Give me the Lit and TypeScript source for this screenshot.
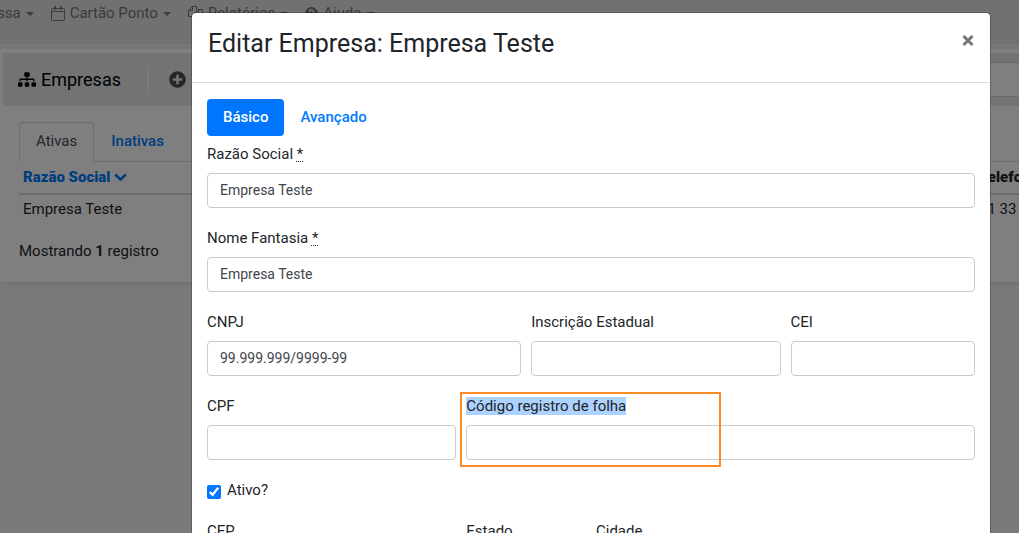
import { LitElement, html, css, svg } from "lit";
import { customElement, state } from "lit/decorators.js";

const sitemap = svg`<path fill="currentColor" d="M128 352H32c-17.67 0-32 14.33-32 32v96c0 17.67 14.33 32 32 32h96c17.67 0 32-14.33 32-32v-96c0-17.67-14.33-32-32-32zm-24-80h192v48h48v-48h192v48h48v-57.59c0-21.17-17.23-38.41-38.41-38.41H344v-64h40c17.67 0 32-14.33 32-32V32c0-17.67-14.33-32-32-32H256c-17.67 0-32 14.33-32 32v96c0 17.67 14.33 32 32 32h40v64H94.41C73.23 224 56 241.23 56 262.41V320h48v-48zm264 80h-96c-17.67 0-32 14.33-32 32v96c0 17.67 14.33 32 32 32h96c17.67 0 32-14.33 32-32v-96c0-17.67-14.33-32-32-32zm240 0h-96c-17.67 0-32 14.33-32 32v96c0 17.67 14.33 32 32 32h96c17.67 0 32-14.33 32-32v-96c0-17.67-14.33-32-32-32z"/>`;
const plusCircle = svg`<path fill="currentColor" d="M256 8C119 8 8 119 8 256s111 248 248 248 248-111 248-248S393 8 256 8zm144 276c0 6.6-5.4 12-12 12h-92v92c0 6.6-5.4 12-12 12h-56c-6.6 0-12-5.4-12-12v-92h-92c-6.6 0-12-5.4-12-12v-56c0-6.6 5.4-12 12-12h92v-92c0-6.6 5.4-12 12-12h56c6.6 0 12 5.4 12 12v92h92c6.6 0 12 5.4 12 12v56z"/>`;

@customElement("app-root")
export class AppRoot extends LitElement {
  static styles = css`
    :host {
      display: block;
      position: relative;
      height: 100vh;
      overflow: hidden;
      background: #f3f7f6;
      color: #212529;
      font: 15px/21px Roboto, "Liberation Sans", sans-serif;
    }
    * { box-sizing: border-box; }
    a { color: #007bff; text-decoration: none; }
    button, input { font: inherit; margin: 0; }
    svg { display: block; flex: none; }

    .navbar {
      display: flex;
      align-items: flex-start;
      height: 44px;
      margin-left: -3px;
      padding-top: 3px;
      background: #e2e2e2;
    }
    .navbar a {
      display: flex;
      align-items: center;
      gap: 5px;
      margin-right: 17px;
      color: #777;
      white-space: nowrap;
    }
    .navbar .caret {
      border: 4px solid transparent;
      border-top-color: currentColor;
      border-bottom: 0;
    }
    .strip { height: 5px; background: #efefef; }

    .card {
      padding: 4px 0 20px 3px;
      background: #fff;
      border-radius: 4px 0 0 4px;
      box-shadow: 0 2px 6px rgba(0, 0, 0, 0.1);
    }
    .card-head {
      display: flex;
      align-items: center;
      height: 53px;
      padding-left: 15px;
      background: #e2e6ea;
    }
    .card-head h1 {
      display: flex;
      align-items: center;
      gap: 5px;
      margin: 0;
      padding-right: 26px;
      font-size: 18px;
      font-weight: 400;
      line-height: 30px;
      color: #000;
      border-right: 2px solid #f4f5f6;
    }
    .add {
      margin-left: 20px;
      padding: 0;
      border: 0;
      background: none;
      color: #4c4c4c;
    }
    .search {
      width: 200px;
      height: 35px;
      margin-left: auto;
      border: 1px solid #ced4da;
      border-right: 0;
      background: #fff;
    }
    .card-body { padding: 16px 0 0 16px; }
    .tabs { display: flex; border-bottom: 1px solid #d5dde5; }
    .tabs a { padding: 8px 16px; border: 1px solid transparent; font-weight: 500; }
    .tabs .on {
      margin-bottom: -1px;
      border-color: #d5dde5 #d5dde5 #fff;
      border-radius: 4px 4px 0 0;
      background: #fff;
      color: #495057;
      font-weight: 400;
    }
    table { width: 100%; border-collapse: collapse; table-layout: fixed; }
    th, td {
      padding: 5px 4px;
      text-align: left;
      white-space: nowrap;
      overflow: hidden;
    }
    td { padding-top: 4px; }
    th { border-bottom: 2px solid #d5dde5; font-weight: 900; }
    th a { display: flex; align-items: center; gap: 4px; }
    .phone { width: 44px; padding-right: 0; }
    .count { margin: 16px 0 0; }

    .backdrop {
      position: absolute;
      inset: 0;
      padding: 12px 28px 0 191px;
      background: rgba(0, 0, 0, 0.5);
    }
    .modal {
      border: 1px solid rgba(0, 0, 0, 0.2);
      border-radius: 5px;
      background: #fff;
      background-clip: padding-box;
    }
    .modal-head {
      display: flex;
      align-items: flex-start;
      justify-content: space-between;
      height: 70px;
      padding: 16px;
      border-bottom: 1px solid #d5dde5;
    }
    .modal-head h2 { margin: 0; font-size: 25px; font-weight: 400; line-height: 30px; }
    .close { padding: 6px 0; border: 0; background: none; color: #777; }
    form { padding: 16px 15px; }
    .pills { display: flex; margin-bottom: 8px; }
    .pills a { padding: 8px 16px; border-radius: 4px; font-weight: 500; }
    .pills .on { background: #0075ff; color: #fff; }
    .grid {
      display: grid;
      grid-template-columns: repeat(12, minmax(0, 1fr));
      gap: 20px 10px;
    }
    .field { position: relative; }
    .w12 { grid-column: span 12; }
    .w8 { grid-column: span 8; }
    .w6 { grid-column: span 6; }
    .w5 { grid-column: span 5; }
    .w4 { grid-column: span 4; }
    .w3 { grid-column: span 3; }
    .w2 { grid-column: span 2; }
    .field label { display: block; margin-bottom: 8px; }
    .field mark { background: #acd2ff; color: inherit; }
    .field abbr { text-decoration: underline dotted 1px; text-underline-offset: 2px; }
    .field input {
      display: block;
      width: 100%;
      height: 35px;
      padding: 5px 12px 7px;
      border: 1px solid #c6ccd2;
      border-radius: 4px;
      background: #fff;
      color: #3f464d;
      font-size: 14px;
    }
    .frame {
      position: absolute;
      top: -4px;
      left: -6px;
      width: 261px;
      height: 75px;
      border: 2px solid #fd8b25;
      pointer-events: none;
    }
    .check { display: flex; align-items: center; gap: 6px; }
    .check input {
      width: 14px;
      height: 14px;
      margin-top: 3px;
      accent-color: #0075ff;
    }
  `;

  @state() private active = true;

  private field(id: string, label: string, span: string, value = "", required = false) {
    return html`<div class="field ${span}">
      <label for=${id}>${label}${required ? html` <abbr title="obrigatório">*</abbr>` : ""}</label>
      <input id=${id} type="text" .value=${value} />
    </div>`;
  }

  render() {
    return html`
      <nav class="navbar">
        <a href="#">ssa <i class="caret"></i></a>
        <a href="#">
          <svg width="14" height="15" viewBox="0 0 14 15" fill="none" stroke="currentColor">
            <path d="M1.5 2.5h11a1 1 0 0 1 1 1v10a1 1 0 0 1-1 1h-11a1 1 0 0 1-1-1v-10a1 1 0 0 1 1-1zM.5 5.5h13M3.5.5h1v3h-1zM9.5.5h1v3h-1z" />
          </svg>
          Cartão Ponto <i class="caret"></i>
        </a>
        <a href="#">
          <svg width="15" height="15" viewBox="0 0 15 15" fill="none" stroke="currentColor">
            <path d="M6 10.5H.5v-6l4-4h4v4M4.5.5v4h-4M14.5 3.500v11h-8v-7l4-4zM10.5 3.500v4h-4" />
          </svg>
          Relatórios <i class="caret"></i>
        </a>
        <a href="#">
          <svg width="13" height="13" viewBox="0 0 13 13">
            <circle cx="6.5" cy="6.5" r="6.5" fill="currentColor" />
            <path d="M4.5 5a2 2 0 1 1 3 1.500c-.8.4-1 .8-1 1.500M6.500 9v1.500" fill="none" stroke="#e2e2e2" stroke-width="1.6" />
          </svg>
          Ajuda <i class="caret"></i>
        </a>
      </nav>
      <div class="strip"></div>
      <main class="card">
        <div class="card-head">
          <h1><svg width="18" height="15" viewBox="0 0 640 512">${sitemap}</svg>Empresas</h1>
          <button class="add" type="button" aria-label="Adicionar">
            <svg width="17" height="17" viewBox="0 0 512 512">${plusCircle}</svg>
          </button>
          <input class="search" type="search" aria-label="Pesquisar" />
        </div>
        <div class="card-body">
          <nav class="tabs"><a class="on" href="#">Ativas</a><a href="#">Inativas</a></nav>
          <table>
            <thead>
              <tr>
                <th>
                  <a href="#">Razão Social
                    <svg width="13" height="9" viewBox="0 0 13 9" fill="none" stroke="currentColor" stroke-width="2.6"><path d="M1.2 1.500l5.3 5 5.3-5" /></svg>
                  </a>
                </th>
                <th class="phone">Telefone</th>
              </tr>
            </thead>
            <tbody>
              <tr><td>Empresa Teste</td><td class="phone">11 33</td></tr>
            </tbody>
          </table>
          <p class="count">Mostrando <b>1</b> registro</p>
        </div>
      </main>

      <div class="backdrop">
        <section class="modal" role="dialog" aria-labelledby="title">
          <header class="modal-head">
            <h2 id="title">Editar Empresa: Empresa Teste</h2>
            <button class="close" type="button" aria-label="Fechar">
              <svg width="12" height="11" viewBox="0 0 12 11" fill="none" stroke="currentColor" stroke-width="3"><path d="M1.5 1l9 9M10.5 1l-9 9" /></svg>
            </button>
          </header>
          <form>
            <nav class="pills"><a class="on" href="#">Básico</a><a href="#">Avançado</a></nav>
            <div class="grid">
              ${this.field("razao", "Razão Social", "w12", "Empresa Teste", true)}
              ${this.field("fantasia", "Nome Fantasia", "w12", "Empresa Teste", true)}
              ${this.field("cnpj", "CNPJ", "w5", "99.999.999/9999-99")}
              ${this.field("ie", "Inscrição Estadual", "w4")}
              ${this.field("cei", "CEI", "w3")}
              ${this.field("cpf", "CPF", "w4")}
              <div class="field w8">
                <label for="folha"><mark>Código registro de folha</mark></label>
                <input id="folha" type="text" />
                <div class="frame"></div>
              </div>
              <label class="check w12">
                <input type="checkbox" .checked=${this.active} @change=${() => (this.active = !this.active)} />
                Ativo?
              </label>
              ${this.field("cep", "CEP", "w4")}
              ${this.field("estado", "Estado", "w2")}
              ${this.field("cidade", "Cidade", "w6")}
            </div>
          </form>
        </section>
      </div>
    `;
  }
}
